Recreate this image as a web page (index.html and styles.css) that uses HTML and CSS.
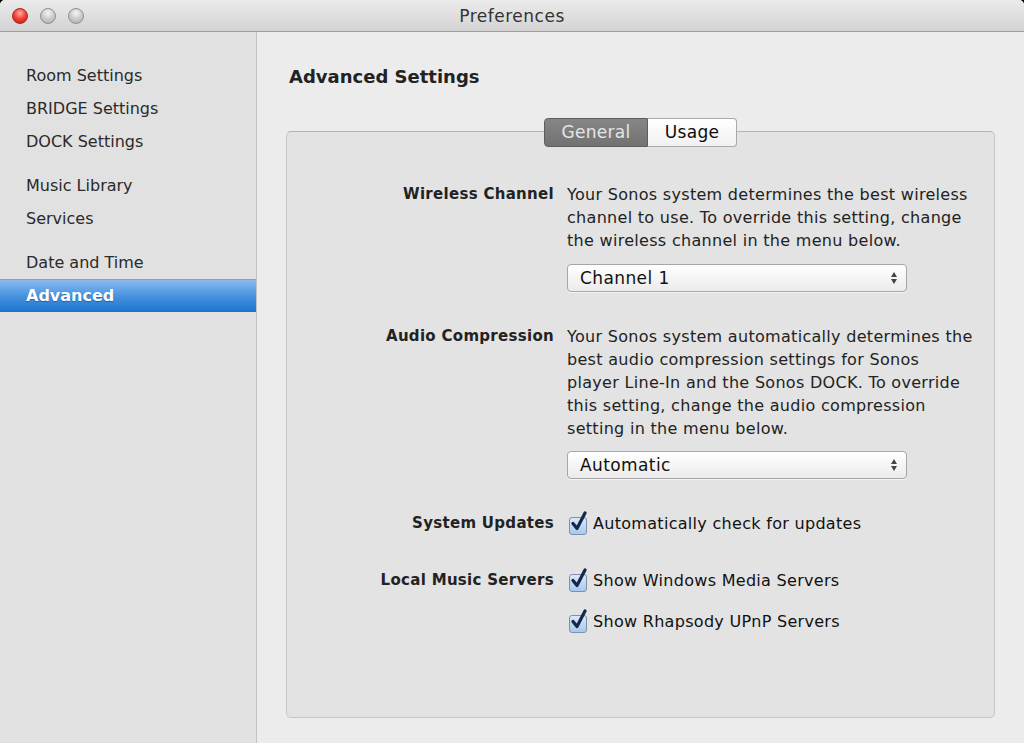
FILE: index.html
```html
<!DOCTYPE html>
<html>
<head>
<meta charset="utf-8">
<title>Preferences</title>
<link rel="stylesheet" href="styles.css">
</head>
<body>
<div class="window">
  <div class="titlebar">
    <div class="lights">
      <span class="light close"></span>
      <span class="light"></span>
      <span class="light"></span>
    </div>
    <div class="title">Preferences</div>
  </div>
  <div class="content">
    <nav class="sidebar">
      <div class="group">
        <div class="item">Room Settings</div>
        <div class="item">BRIDGE Settings</div>
        <div class="item">DOCK Settings</div>
      </div>
      <div class="group">
        <div class="item">Music Library</div>
        <div class="item">Services</div>
      </div>
      <div class="group">
        <div class="item">Date and Time</div>
        <div class="item selected">Advanced</div>
      </div>
    </nav>
    <main class="main">
      <h1 class="heading">Advanced Settings</h1>
      <div class="tabs">
        <div class="tab active">General</div>
        <div class="tab">Usage</div>
      </div>
      <div class="box">
        <div class="form">
          <div class="label">Wireless Channel</div>
          <div class="field">
            <p class="desc">Your Sonos system determines the best wireless channel to use. To override this setting, change the wireless channel in the menu below.</p>
            <div class="popup popup-1"><span>Channel 1</span><span class="arrows"><i class="up"></i><i class="down"></i></span></div>
          </div>

          <div class="label row2">Audio Compression</div>
          <div class="field row2">
            <p class="desc">Your Sonos system automatically determines the best audio compression settings for Sonos player Line-In and the Sonos DOCK. To override this setting, change the audio compression setting in the menu below.</p>
            <div class="popup popup-2"><span>Automatic</span><span class="arrows"><i class="up"></i><i class="down"></i></span></div>
          </div>

          <div class="label row3">System Updates</div>
          <div class="field row3">
            <div class="check"><span class="box-check"><svg viewBox="0 0 20 22" width="20" height="22"><path d="M4 12.5 L8 17.5 L16 2" fill="none" stroke="#13284f" stroke-width="3.2" stroke-linecap="round" stroke-linejoin="round"/></svg></span>Automatically check for updates</div>
          </div>

          <div class="label row4">Local Music Servers</div>
          <div class="field row4">
            <div class="check"><span class="box-check"><svg viewBox="0 0 20 22" width="20" height="22"><path d="M4 12.5 L8 17.5 L16 2" fill="none" stroke="#13284f" stroke-width="3.2" stroke-linecap="round" stroke-linejoin="round"/></svg></span>Show Windows Media Servers</div>
            <div class="check check-2"><span class="box-check"><svg viewBox="0 0 20 22" width="20" height="22"><path d="M4 12.5 L8 17.5 L16 2" fill="none" stroke="#13284f" stroke-width="3.2" stroke-linecap="round" stroke-linejoin="round"/></svg></span>Show Rhapsody UPnP Servers</div>
          </div>
        </div>
      </div>
    </main>
  </div>
</div>
</body>
</html>
```

FILE: styles.css
```css
* { box-sizing: border-box; }
html, body { margin: 0; padding: 0; }
body {
  width: 1024px;
  height: 743px;
  overflow: hidden;
  background: #000;
  font-family: "DejaVu Sans", "Liberation Sans", sans-serif;
  color: #222;
}
.window {
  width: 1024px;
  height: 743px;
  display: flex;
  flex-direction: column;
  background: #ececec;
  border-radius: 5px 5px 0 0;
  overflow: hidden;
}
.titlebar {
  height: 32px;
  flex: none;
  display: flex;
  align-items: center;
  position: relative;
  background: linear-gradient(#ebebeb, #d3d3d3);
  border-bottom: 1px solid #9d9d9d;
}
.lights {
  display: flex;
  gap: 12px;
  padding-left: 12px;
}
.light {
  width: 16px;
  height: 16px;
  border-radius: 50%;
  background: radial-gradient(circle at 50% 30%, #f4f4f4 0%, #cfcfcf 45%, #a9a9a9 100%);
  border: 1px solid #8f8f8f;
}
.light.close {
  background: radial-gradient(circle at 50% 30%, #ffb2a8 0%, #f0463a 45%, #c4150f 100%);
  border-color: #a6261e;
}
.title {
  position: absolute;
  left: 0;
  right: 0;
  text-align: center;
  font-size: 17px;
  letter-spacing: 0.5px;
  color: #333;
}
.content {
  flex: 1;
  display: flex;
}
.sidebar {
  width: 257px;
  flex: none;
  background: #e1e1e1;
  border-right: 1px solid #c2c2c2;
  padding-top: 27px;
}
.group {
  margin-bottom: 11px;
}
.item {
  height: 33px;
  line-height: 33px;
  padding-left: 26px;
  font-size: 16px;
  color: #2a2a2a;
}
.item.selected {
  background: linear-gradient(#8bbaee, #4893e0 50%, #1a74cf);
  border-top: 1px solid #6fa8e6;
  color: #fff;
  font-weight: bold;
  line-height: 31px;
  text-shadow: 0 1px 1px rgba(0, 30, 80, 0.35);
}
.main {
  flex: 1;
  padding: 33px 29px 25px 29px;
  display: flex;
  flex-direction: column;
}
.heading {
  margin: 0 0 0 3px;
  font-size: 18px;
  font-weight: bold;
  color: #222;
  line-height: 24px;
}
.tabs {
  display: flex;
  justify-content: center;
  margin-top: 29px;
  height: 29px;
  position: relative;
  z-index: 1;
}
.tab {
  height: 29px;
  line-height: 27px;
  font-size: 17px;
  letter-spacing: 0.3px;
  background: linear-gradient(#ffffff, #f1f1f1);
  border: 1px solid #a9a9a9;
  color: #0c0c0c;
}
.tab.active {
  width: 104px;
  text-align: center;
  border-radius: 4px 0 0 4px;
  background: linear-gradient(#868686, #727272);
  border-color: #5e5e5e;
  color: #e6e6e6;
}
.tab + .tab {
  width: 89px;
  text-align: center;
  border-left: none;
  border-radius: 0 4px 4px 0;
}
.box {
  flex: 1;
  margin-top: -16px;
  background: #e3e3e3;
  border: 1px solid #c6c6c6;
  border-top-color: #b4b4b4;
  border-radius: 5px;
  padding: 51px 18px 0 0;
}
.form {
  display: grid;
  grid-template-columns: 267px 1fr;
  column-gap: 13px;
  font-size: 16px;
  line-height: 23px;
}
.label {
  text-align: right;
  font-weight: bold;
  font-size: 15px;
  letter-spacing: 0.3px;
  color: #222;
  white-space: nowrap;
}
.desc {
  margin: 0;
  color: #222;
  letter-spacing: 0.3px;
}
.row2 { margin-top: 33px; }
.row3 { margin-top: 33px; }
.row4 { margin-top: 34px; }
.popup {
  margin-top: 12px;
  width: 340px;
  height: 28px;
  border: 1px solid #a7a7a7;
  border-radius: 4px;
  background: linear-gradient(#ffffff, #f3f3f3 60%, #ebebeb);
  display: flex;
  align-items: center;
  justify-content: space-between;
  padding: 0 9px 0 12px;
  font-size: 17px;
  letter-spacing: 0.4px;
  color: #111;
  box-shadow: 0 1px 0 rgba(255,255,255,0.6);
}
.popup-2 { margin-top: 11px; }
.arrows {
  display: flex;
  flex-direction: column;
  gap: 2px;
}
.arrows i {
  display: block;
  width: 0;
  height: 0;
  border-left: 3.5px solid transparent;
  border-right: 3.5px solid transparent;
}
.arrows .up { border-bottom: 5px solid #444; }
.arrows .down { border-top: 5px solid #444; }
.check {
  display: flex;
  align-items: center;
  font-size: 16px;
  letter-spacing: 0.3px;
  color: #111;
  height: 23px;
}
.check-2 { margin-top: 18px; }
.box-check {
  position: relative;
  width: 18px;
  height: 18px;
  margin: 0 6px 0 2px;
  border: 1px solid #7d90ad;
  border-radius: 3px;
  background: linear-gradient(#dbe9f9, #a9c8ec);
  flex: none;
  top: 2px;
}
.box-check svg {
  position: absolute;
  left: -1px;
  top: -7px;
}
```
